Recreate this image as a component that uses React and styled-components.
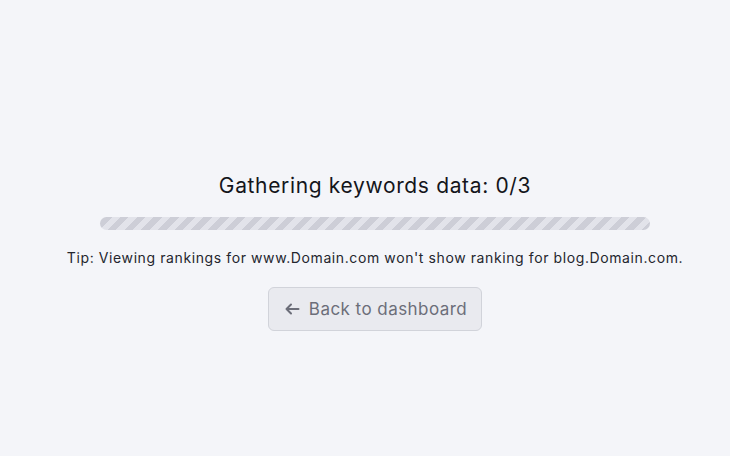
import React from "react";
import styled, { createGlobalStyle } from "styled-components";

const Global = createGlobalStyle`
  html, body { margin: 0; padding: 0; background: #f4f5f9; }
  body { font-family: Inter, "Noto Sans", sans-serif; -webkit-font-smoothing: antialiased; }
`;

const Page = styled.main`
  min-height: 456px;
  display: flex;
  flex-direction: column;
  align-items: center;
  padding: 172px 0 0 20px;
  box-sizing: border-box;
`;

const Title = styled.h1`
  margin: 0;
  font-size: 21px;
  line-height: 28px;
  font-weight: 400;
  letter-spacing: 0.65px;
  color: #14151b;
`;

const Bar = styled.div`
  margin-top: 17px;
  width: 550px;
  height: 13px;
  border-radius: 7px;
  background: repeating-linear-gradient(
    -45deg,
    #cdced7 0px,
    #cdced7 6px,
    #e2e3ea 6px,
    #e2e3ea 11.8px
  );
`;

const Tip = styled.p`
  margin: 18px 0 0;
  font-size: 14px;
  line-height: 20px;
  letter-spacing: 0.6px;
  color: #24262e;
`;

const BackButton = styled.button`
  margin-top: 19px;
  height: 44px;
  padding: 0 14px 0 15px;
  display: flex;
  align-items: center;
  gap: 9px;
  background: #e9eaef;
  border: 1px solid #d1d3da;
  border-radius: 6px;
  color: #6c6e79;
  font-family: inherit;
  font-size: 17px;
  letter-spacing: 0.45px;
  cursor: pointer;
`;

const ArrowIcon = () => (
  <svg width="16" height="16" viewBox="0 0 16 16" fill="none">
    <path d="M14.5 8H2.5M7 3.5L2.5 8L7 12.5" stroke="#6c6e79" strokeWidth="2" strokeLinecap="round" strokeLinejoin="round" />
  </svg>
);

export default function App() {
  return (
    <>
      <Global />
      <Page>
        <Title>Gathering keywords data: 0/3</Title>
        <Bar />
        <Tip>Tip: Viewing rankings for www.Domain.com won't show ranking for blog.Domain.com.</Tip>
        <BackButton>
          <ArrowIcon />
          Back to dashboard
        </BackButton>
      </Page>
    </>
  );
}
